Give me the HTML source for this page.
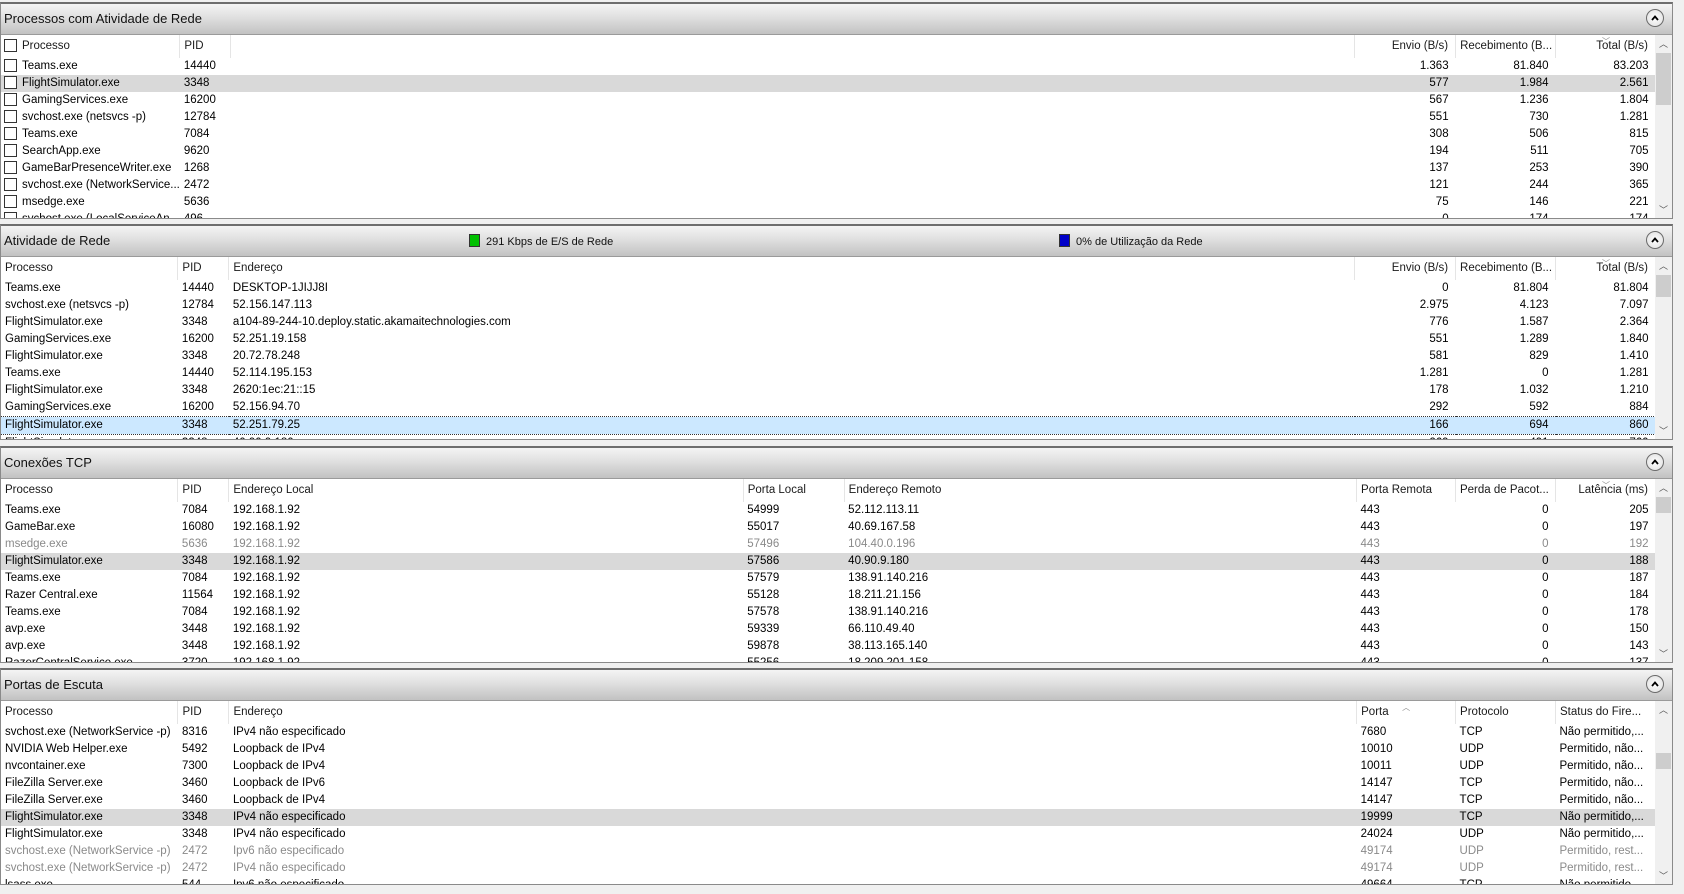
<!DOCTYPE html>
<html><head><meta charset="utf-8"><style>
body{margin:0;width:1684px;height:894px;background:#f0f0f0;font-family:"Liberation Sans",sans-serif;font-size:11.5px;color:#000;overflow:hidden;position:relative}
.sec{position:absolute;left:0;width:1673px;background:#fff;border:1px solid #8a8a8a;border-top:2px solid #6e6e6e;overflow:hidden;box-sizing:border-box}
.hd{position:absolute;left:0;right:0;top:0;height:30px;background:linear-gradient(#f4f4f4,#e2e2e2 40%,#c2c2c2);border-bottom:1px solid #9a9a9a;font-size:13px;line-height:30px;padding-left:3px;color:#111}
.btn{position:absolute;right:8px;top:5px;width:18px;height:18px;border-radius:50%;border:1px solid #6a6a6a;background:radial-gradient(#fff,#ddd);box-sizing:border-box}
.btn svg{position:absolute;left:3px;top:3px}
.list{position:absolute;left:0;top:31px;width:1655px;bottom:0;overflow:hidden}
table{border-collapse:collapse;table-layout:fixed}
td{height:17px;padding:0 0 0 4px;white-space:nowrap;overflow:hidden;line-height:17px}
tr.h td{height:23px;border-right:1px solid #e5e5e5;color:#1a1a1a}
td.r{text-align:right;padding:0 7px 0 0}
tr.sel td{background:#d9d9d9}
tr.g td{color:#8a8a8a}
tr.bl td{background:#cce8ff;border-top:1px dotted #333;border-bottom:1px dotted #333}
.cb{display:inline-block;width:11px;height:11px;border:1px solid #333;vertical-align:-3px;margin:0 5px 0 -1px;background:#fff}
.sb{position:absolute;right:0;top:31px;width:17px;bottom:0;background:#f0f0f0}
.sb .t{position:absolute;left:1px;width:15px;background:#cdcdcd}
.sb .u,.sb .d{position:absolute;left:4px;font-size:9px;color:#555}
.sb .u{top:2px}.sb .d{bottom:2px}
.leg{position:absolute;top:8px;font-size:11px;line-height:14px}
.leg i{display:inline-block;width:9px;height:11px;vertical-align:-2px;margin-right:6px;border:1px solid #333}
.sort{position:absolute;top:-2px;font-size:8px;color:#888}
</style></head><body>

<!-- Section 1 -->
<div class="sec" style="top:2px;height:217px">
<div class="hd">Processos com Atividade de Rede<div class="btn"><svg width="10" height="10"><path d="M2 7 L5 3.5 L8 7" stroke="#000" stroke-width="1.8" fill="none"/></svg></div></div>
<div class="list"><table>
<colgroup><col style="width:177px"><col style="width:51px"><col style="width:1127px"><col style="width:101px"><col style="width:100px"><col style="width:100px"></colgroup>
<tr class="h"><td><span class="cb"></span>Processo</td><td>PID</td><td></td><td class="r">Envio (B/s)</td><td>Recebimento (B...</td><td class="r" style="position:relative"><span class="sort" style="right:45px">﹀</span>Total (B/s)</td></tr>
<tr><td><span class="cb"></span>Teams.exe</td><td>14440</td><td></td><td class="r">1.363</td><td class="r">81.840</td><td class="r">83.203</td></tr>
<tr class="sel"><td><span class="cb"></span>FlightSimulator.exe</td><td>3348</td><td></td><td class="r">577</td><td class="r">1.984</td><td class="r">2.561</td></tr>
<tr><td><span class="cb"></span>GamingServices.exe</td><td>16200</td><td></td><td class="r">567</td><td class="r">1.236</td><td class="r">1.804</td></tr>
<tr><td><span class="cb"></span>svchost.exe (netsvcs -p)</td><td>12784</td><td></td><td class="r">551</td><td class="r">730</td><td class="r">1.281</td></tr>
<tr><td><span class="cb"></span>Teams.exe</td><td>7084</td><td></td><td class="r">308</td><td class="r">506</td><td class="r">815</td></tr>
<tr><td><span class="cb"></span>SearchApp.exe</td><td>9620</td><td></td><td class="r">194</td><td class="r">511</td><td class="r">705</td></tr>
<tr><td><span class="cb"></span>GameBarPresenceWriter.exe</td><td>1268</td><td></td><td class="r">137</td><td class="r">253</td><td class="r">390</td></tr>
<tr><td><span class="cb"></span>svchost.exe (NetworkService...</td><td>2472</td><td></td><td class="r">121</td><td class="r">244</td><td class="r">365</td></tr>
<tr><td><span class="cb"></span>msedge.exe</td><td>5636</td><td></td><td class="r">75</td><td class="r">146</td><td class="r">221</td></tr>
<tr><td><span class="cb"></span>svchost.exe (LocalServiceAn...</td><td>496</td><td></td><td class="r">0</td><td class="r">174</td><td class="r">174</td></tr>
</table></div>
<div class="sb"><span class="u">︿</span><div class="t" style="top:18px;height:52px"></div><span class="d">﹀</span></div>
</div>

<!-- Section 2 -->
<div class="sec" style="top:224px;height:216px">
<div class="hd">Atividade de Rede
<span class="leg" style="left:468px"><i style="background:#00c000"></i>291 Kbps de E/S de Rede</span>
<span class="leg" style="left:1058px"><i style="background:#0000c8"></i>0% de Utilização da Rede</span>
<div class="btn"><svg width="10" height="10"><path d="M2 7 L5 3.5 L8 7" stroke="#000" stroke-width="1.8" fill="none"/></svg></div></div>
<div class="list"><table>
<colgroup><col style="width:177px"><col style="width:51px"><col style="width:1127px"><col style="width:101px"><col style="width:100px"><col style="width:100px"></colgroup>
<tr class="h"><td>Processo</td><td>PID</td><td>Endereço</td><td class="r">Envio (B/s)</td><td>Recebimento (B...</td><td class="r" style="position:relative"><span class="sort" style="right:45px">﹀</span>Total (B/s)</td></tr>
<tr><td>Teams.exe</td><td>14440</td><td>DESKTOP-1JIJJ8I</td><td class="r">0</td><td class="r">81.804</td><td class="r">81.804</td></tr>
<tr><td>svchost.exe (netsvcs -p)</td><td>12784</td><td>52.156.147.113</td><td class="r">2.975</td><td class="r">4.123</td><td class="r">7.097</td></tr>
<tr><td>FlightSimulator.exe</td><td>3348</td><td>a104-89-244-10.deploy.static.akamaitechnologies.com</td><td class="r">776</td><td class="r">1.587</td><td class="r">2.364</td></tr>
<tr><td>GamingServices.exe</td><td>16200</td><td>52.251.19.158</td><td class="r">551</td><td class="r">1.289</td><td class="r">1.840</td></tr>
<tr><td>FlightSimulator.exe</td><td>3348</td><td>20.72.78.248</td><td class="r">581</td><td class="r">829</td><td class="r">1.410</td></tr>
<tr><td>Teams.exe</td><td>14440</td><td>52.114.195.153</td><td class="r">1.281</td><td class="r">0</td><td class="r">1.281</td></tr>
<tr><td>FlightSimulator.exe</td><td>3348</td><td>2620:1ec:21::15</td><td class="r">178</td><td class="r">1.032</td><td class="r">1.210</td></tr>
<tr><td>GamingServices.exe</td><td>16200</td><td>52.156.94.70</td><td class="r">292</td><td class="r">592</td><td class="r">884</td></tr>
<tr class="bl"><td>FlightSimulator.exe</td><td>3348</td><td>52.251.79.25</td><td class="r">166</td><td class="r">694</td><td class="r">860</td></tr>
<tr><td>FlightSimulator.exe</td><td>3348</td><td>40.90.9.180</td><td class="r">269</td><td class="r">491</td><td class="r">760</td></tr>
</table></div>
<div class="sb"><span class="u">︿</span><div class="t" style="top:18px;height:22px"></div><span class="d">﹀</span></div>
</div>

<!-- Section 3 -->
<div class="sec" style="top:446px;height:217px">
<div class="hd">Conexões TCP<div class="btn"><svg width="10" height="10"><path d="M2 7 L5 3.5 L8 7" stroke="#000" stroke-width="1.8" fill="none"/></svg></div></div>
<div class="list"><table>
<colgroup><col style="width:177px"><col style="width:51px"><col style="width:515px"><col style="width:101px"><col style="width:513px"><col style="width:99px"><col style="width:100px"><col style="width:100px"></colgroup>
<tr class="h"><td>Processo</td><td>PID</td><td>Endereço Local</td><td>Porta Local</td><td>Endereço Remoto</td><td>Porta Remota</td><td>Perda de Pacot...</td><td class="r" style="position:relative"><span class="sort" style="right:45px">﹀</span>Latência (ms)</td></tr>
<tr><td>Teams.exe</td><td>7084</td><td>192.168.1.92</td><td>54999</td><td>52.112.113.11</td><td>443</td><td class="r">0</td><td class="r">205</td></tr>
<tr><td>GameBar.exe</td><td>16080</td><td>192.168.1.92</td><td>55017</td><td>40.69.167.58</td><td>443</td><td class="r">0</td><td class="r">197</td></tr>
<tr class="g"><td>msedge.exe</td><td>5636</td><td>192.168.1.92</td><td>57496</td><td>104.40.0.196</td><td>443</td><td class="r">0</td><td class="r">192</td></tr>
<tr class="sel"><td>FlightSimulator.exe</td><td>3348</td><td>192.168.1.92</td><td>57586</td><td>40.90.9.180</td><td>443</td><td class="r">0</td><td class="r">188</td></tr>
<tr><td>Teams.exe</td><td>7084</td><td>192.168.1.92</td><td>57579</td><td>138.91.140.216</td><td>443</td><td class="r">0</td><td class="r">187</td></tr>
<tr><td>Razer Central.exe</td><td>11564</td><td>192.168.1.92</td><td>55128</td><td>18.211.21.156</td><td>443</td><td class="r">0</td><td class="r">184</td></tr>
<tr><td>Teams.exe</td><td>7084</td><td>192.168.1.92</td><td>57578</td><td>138.91.140.216</td><td>443</td><td class="r">0</td><td class="r">178</td></tr>
<tr><td>avp.exe</td><td>3448</td><td>192.168.1.92</td><td>59339</td><td>66.110.49.40</td><td>443</td><td class="r">0</td><td class="r">150</td></tr>
<tr><td>avp.exe</td><td>3448</td><td>192.168.1.92</td><td>59878</td><td>38.113.165.140</td><td>443</td><td class="r">0</td><td class="r">143</td></tr>
<tr><td>RazerCentralService.exe</td><td>3720</td><td>192.168.1.92</td><td>55256</td><td>18.209.201.158</td><td>443</td><td class="r">0</td><td class="r">137</td></tr>
</table></div>
<div class="sb"><span class="u">︿</span><div class="t" style="top:18px;height:16px"></div><span class="d">﹀</span></div>
</div>

<!-- Section 4 -->
<div class="sec" style="top:668px;height:217px">
<div class="hd">Portas de Escuta<div class="btn"><svg width="10" height="10"><path d="M2 7 L5 3.5 L8 7" stroke="#000" stroke-width="1.8" fill="none"/></svg></div></div>
<div class="list"><table>
<colgroup><col style="width:177px"><col style="width:51px"><col style="width:1129px"><col style="width:99px"><col style="width:100px"><col style="width:100px"></colgroup>
<tr class="h"><td>Processo</td><td>PID</td><td>Endereço</td><td style="position:relative"><span class="sort" style="left:45px">︿</span>Porta</td><td>Protocolo</td><td>Status do Fire...</td></tr>
<tr><td>svchost.exe (NetworkService -p)</td><td>8316</td><td>IPv4 não especificado</td><td>7680</td><td>TCP</td><td>Não permitido,...</td></tr>
<tr><td>NVIDIA Web Helper.exe</td><td>5492</td><td>Loopback de IPv4</td><td>10010</td><td>UDP</td><td>Permitido, não...</td></tr>
<tr><td>nvcontainer.exe</td><td>7300</td><td>Loopback de IPv4</td><td>10011</td><td>UDP</td><td>Permitido, não...</td></tr>
<tr><td>FileZilla Server.exe</td><td>3460</td><td>Loopback de IPv6</td><td>14147</td><td>TCP</td><td>Permitido, não...</td></tr>
<tr><td>FileZilla Server.exe</td><td>3460</td><td>Loopback de IPv4</td><td>14147</td><td>TCP</td><td>Permitido, não...</td></tr>
<tr class="sel"><td>FlightSimulator.exe</td><td>3348</td><td>IPv4 não especificado</td><td>19999</td><td>TCP</td><td>Não permitido,...</td></tr>
<tr><td>FlightSimulator.exe</td><td>3348</td><td>IPv4 não especificado</td><td>24024</td><td>UDP</td><td>Não permitido,...</td></tr>
<tr class="g"><td>svchost.exe (NetworkService -p)</td><td>2472</td><td>Ipv6 não especificado</td><td>49174</td><td>UDP</td><td>Permitido, rest...</td></tr>
<tr class="g"><td>svchost.exe (NetworkService -p)</td><td>2472</td><td>IPv4 não especificado</td><td>49174</td><td>UDP</td><td>Permitido, rest...</td></tr>
<tr><td>lsass.exe</td><td>544</td><td>Ipv6 não especificado</td><td>49664</td><td>TCP</td><td>Não permitido,...</td></tr>
</table></div>
<div class="sb"><span class="u">︿</span><div class="t" style="top:52px;height:16px"></div><span class="d">﹀</span></div>
</div>

</body></html>
